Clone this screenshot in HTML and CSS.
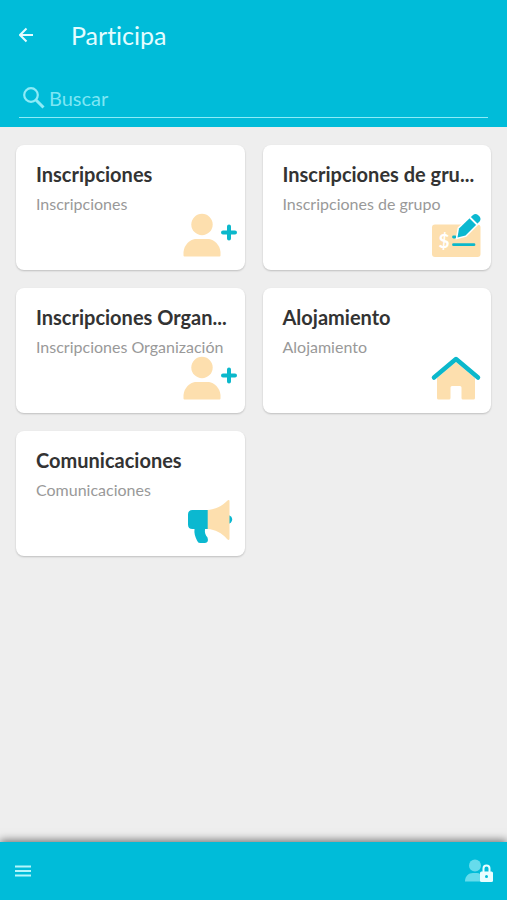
FILE: index.html
```html
<!DOCTYPE html>
<html lang="es">
<head>
  <meta charset="UTF-8">
  <meta name="viewport" content="width=device-width, initial-scale=1.0">
  <title>Participa</title>
  <link rel="stylesheet" href="styles.css">
</head>
<body>
  <!-- Shared icons -->
  <svg class="sprite" aria-hidden="true">
    <symbol id="user-plus" viewBox="0 0 62 46">
      <circle class="sand" cx="26" cy="12.5" r="10.7"/>
      <path class="sand" d="M7.500 43.500V40C8 33 14 27.500 19 27h14c5 .5 11 6 11.500 13v3.500q0 1-1 1h-35q-1 0-1-1z"/>
      <path class="teal-line" stroke-width="4" d="M53 14.500v12M47 20.500h12"/>
    </symbol>
  </svg>

  <header class="header">
    <div class="title-bar">
      <button type="button" class="icon-btn" aria-label="Volver">
        <svg width="16" height="16" viewBox="0 0 16 16">
          <path d="M14 8H1M7.500 1.500L1 8l6.500 6.500" fill="none" stroke="#e4fcff" stroke-width="2"/>
        </svg>
      </button>
      <h1>Participa</h1>
    </div>
    <div class="search">
      <label for="search" aria-label="Buscar">
        <svg width="24" height="24" viewBox="0 0 24 24">
          <circle cx="9" cy="9" r="6.800" fill="none" stroke="#8eebf7" stroke-width="2.200"/>
          <path d="M14 14l7.500 7.500" stroke="#8eebf7" stroke-width="3"/>
        </svg>
      </label>
      <input type="search" id="search" name="search" placeholder="Buscar">
    </div>
  </header>

  <main class="cards">
    <a class="card" href="#inscripciones">
      <h2>Inscripciones</h2>
      <p>Inscripciones</p>
      <svg class="card-icon"><use href="#user-plus"/></svg>
    </a>
    <a class="card" href="#grupo">
      <h2>Inscripciones de gru...</h2>
      <p>Inscripciones de grupo</p>
      <svg class="card-icon" viewBox="0 0 62 46">
        <rect class="sand" x="10" y="12.500" width="48.500" height="32.500" rx="3"/>
        <text class="dollar" x="22" y="36" text-anchor="middle">$</text>
        <path class="teal-line" stroke-width="2.800" d="M31.500 32.700h20.500M31.500 25h1.500"/>
        <!-- Pencil with a white outline over the check -->
        <path class="teal outlined" d="M35.500 25.500l1.500-9L51 3q2.500-2 5 0l1.500 1.500q2 2.500 0 5L43.500 23.500z"/>
        <path d="M48 5.500l7.500 7.500" stroke="#fff" stroke-width="1.800"/>
      </svg>
    </a>
    <a class="card" href="#organizacion">
      <h2>Inscripciones Organ...</h2>
      <p>Inscripciones Organización</p>
      <svg class="card-icon"><use href="#user-plus"/></svg>
    </a>
    <a class="card" href="#alojamiento">
      <h2>Alojamiento</h2>
      <p>Alojamiento</p>
      <svg class="card-icon" viewBox="0 0 62 46">
        <path class="sand" d="M34 7L15 23v20q0 1.500 1.500 1.500H27q1.500 0 1.500-1.500V32.500q0-1.500 1.500-1.500h8q1.500 0 1.500 1.500V43q0 1.500 1.500 1.500H51.500q1.500 0 1.500-1.500V23z"/>
        <path class="teal-line" stroke-width="4.500" d="M12 22.500L34 4l22 18.500"/>
      </svg>
    </a>
    <a class="card" href="#comunicaciones">
      <h2>Comunicaciones</h2>
      <p>Comunicaciones</p>
      <svg class="card-icon" viewBox="0 0 62 46">
        <circle class="teal" cx="52" cy="21.500" r="4.200"/>
        <path class="teal" d="M16.500 12H32v19h-3c-.5 4 .5 6 2.500 8.500q1.500 5-2.500 5.500h-5q-2 0-3-2.500C19 38.500 18 35 18.500 31h-2q-4.500 0-4.500-4.500v-10q0-4.500 4.500-4.500z"/>
        <path class="sand" d="M31.700 12C39 11.500 46 8 51 3q2.500-2 2.500.5v37q0 2.500-2.500.5C46 35 39 31.500 31.700 31z"/>
      </svg>
    </a>
  </main>

  <footer class="footer">
    <button type="button" class="icon-btn" aria-label="Menú">
      <svg width="16" height="12" viewBox="0 0 16 12">
        <path d="M0 1.500h16M0 6h16M0 10.500h16" stroke="#b4f6fc" stroke-width="2"/>
      </svg>
    </button>
    <button type="button" class="icon-btn" aria-label="Mi cuenta">
      <svg width="28" height="24" viewBox="0 0 28 24">
        <circle cx="10" cy="6.500" r="6" fill="#66dcec"/>
        <path d="M0 22.500C0 17 3.500 14 8 14h4c2.500 0 3.500 1 3.500 2.500v6z" fill="#66dcec"/>
        <path d="M18.500 13V9.500a3 3 0 0 1 6 0V13" fill="none" stroke="#e9feff" stroke-width="2"/>
        <rect x="15" y="12.500" width="13" height="10.500" rx="1.500" fill="#e9feff"/>
        <circle cx="21.500" cy="17.500" r="1.500" fill="#00bcd9"/>
      </svg>
    </button>
  </footer>
</body>
</html>
```

FILE: styles.css
```css
*, *::before, *::after {
  box-sizing: border-box;
}
body {
  display: flex;
  flex-direction: column;
  min-height: 100vh;
  margin: 0;
  background: #eee;
  color: #333;
  font-family: Lato, sans-serif;
  font-variant-ligatures: none;
}
h1, h2, p {
  margin: 0;
}
svg {
  display: block;
}
.sprite {
  display: none;
}
.icon-btn {
  padding: 0;
  border: none;
  background: none;
  cursor: pointer;
}

/* Header */
.header {
  padding: 15px 19px 9px;
  background: #00bcd9;
}
.title-bar {
  display: flex;
  align-items: center;
  gap: 36px;
  height: 40px;
}
.title-bar h1 {
  color: #e4fcff;
  font-size: 25px;
  font-weight: 400;
}
.search {
  display: flex;
  align-items: center;
  gap: 3px;
  height: 39px;
  margin-top: 24px;
  padding-left: 3px;
  border-bottom: 1px solid #8eebf7;
}
.search input {
  flex: 1;
  min-width: 0;
  padding: 0;
  border: none;
  outline: none;
  background: none;
  color: #fff;
  font: 20px Lato, sans-serif;
}
.search input::placeholder {
  color: #7de6f4;
}

/* Cards */
.cards {
  flex: 1;
  display: grid;
  grid-template-columns: repeat(2, minmax(0, 1fr));
  align-content: start;
  gap: 18px;
  padding: 18px 16px;
}
.card {
  display: flex;
  flex-direction: column;
  padding: 17px 7px 12px 20px;
  border-radius: 8px;
  background: #fff;
  box-shadow: 0 1px 2px rgba(0, 0, 0, 0.2);
  color: inherit;
  text-decoration: none;
}
.card h2 {
  font-size: 20px;
  font-weight: 700;
  line-height: 24px;
  white-space: nowrap;
}
.card p {
  margin-top: 8px;
  color: #999;
  font-size: 16px;
  line-height: 20px;
  white-space: nowrap;
}
.card-icon {
  align-self: flex-end;
  width: 62px;
  height: 46px;
  margin-top: -2px;
}
.sand {
  fill: #fddfae;
}
.teal {
  fill: #0bb8d0;
}
.teal-line {
  fill: none;
  stroke: #0bb8cb;
  stroke-linecap: round;
  stroke-linejoin: round;
}
.outlined {
  stroke: #fff;
  stroke-width: 3px;
  paint-order: stroke;
}
.dollar {
  fill: #fff;
  font-size: 19px;
  font-weight: 700;
}

/* Footer */
.footer {
  display: flex;
  align-items: center;
  justify-content: space-between;
  height: 58px;
  padding: 0 14px 0 15px;
  background: #00bcd9;
  box-shadow: 0 -2px 8px rgba(0, 0, 0, 0.5);
}
```
